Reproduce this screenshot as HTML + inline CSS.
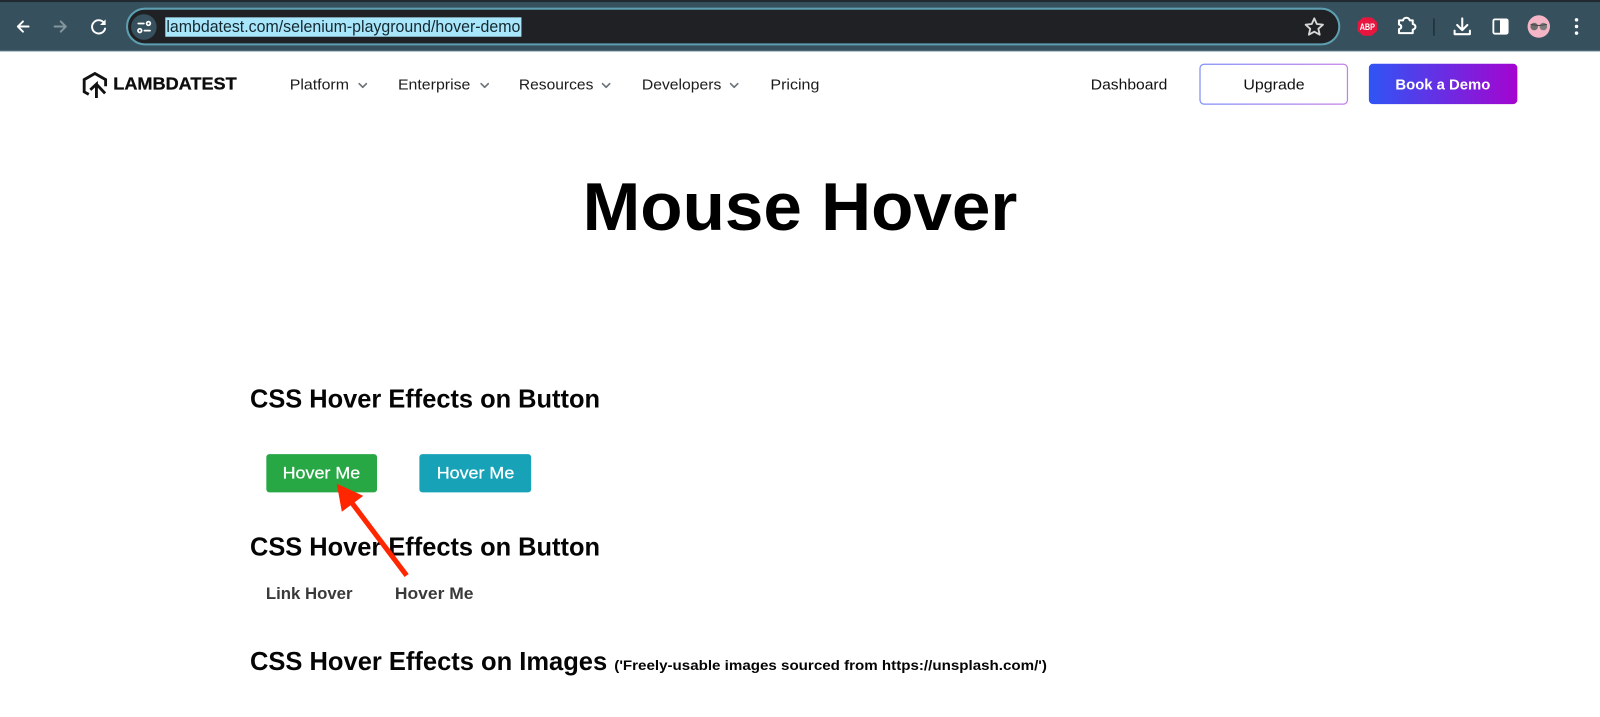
<!DOCTYPE html>
<html lang="en">
<head>
<meta charset="utf-8">
<title>Mouse Hover</title>
<style>
html,body{margin:0;padding:0;background:#fff;width:1600px;height:717px;overflow:hidden}
svg{display:block}
text{font-family:"Liberation Sans",sans-serif}
</style>
</head>
<body>
<svg width="1600" height="717" viewBox="0 0 1568 702.66" preserveAspectRatio="none" xmlns="http://www.w3.org/2000/svg">
<defs>
<linearGradient id="g1" x1="0" x2="1" y1="0" y2="0"><stop offset="0" stop-color="#2f55f5"/><stop offset="1" stop-color="#a405d0"/></linearGradient>
<linearGradient id="g2" x1="0" x2="1" y1="0" y2="0"><stop offset="0" stop-color="#7e8ff8"/><stop offset="1" stop-color="#c47fe6"/></linearGradient>
</defs>
<rect width="1568" height="703" fill="#fff"/>

<!-- browser toolbar -->
<rect width="1568" height="50.500" fill="#36515d"/>
<rect width="1568" height="2" fill="#202a30"/>
<rect y="49.800" width="1568" height="1.200" fill="#b5c8cf"/>

<g fill="none" stroke-linecap="round" stroke-linejoin="round" stroke-width="1.900">
<path d="M28 26H17.500M22.500 21L17.500 26L22.500 31" stroke="#fff"/>
<path d="M53.500 26H64.500M59.500 21L64.500 26L59.500 31" stroke="#84979f"/>
<path d="M102 22.500A6.500 6.500 0 1 0 103 28" stroke="#fff"/>
</g>
<path d="M103.500 19V24.500H98Z" fill="#fff"/>

<rect x="124.500" y="8.500" width="1188" height="35" rx="17.500" fill="#202124" stroke="#5d9eb0" stroke-width="2"/>
<circle cx="141" cy="26.500" r="12.500" fill="#36515d"/>
<g fill="none" stroke="#fff" stroke-width="1.700" stroke-linecap="round">
<path d="M135.500 23H141"/><circle cx="145.500" cy="23" r="1.800"/>
<path d="M141.500 30H147"/><circle cx="137" cy="30" r="1.800"/>
</g>
<rect x="162" y="17" width="349" height="19" fill="#a8e6fb"/>
<text x="163" y="31.500" font-size="16" fill="#15282f" textLength="347" lengthAdjust="spacingAndGlyphs">lambdatest.com/selenium-playground/hover-demo</text>

<path d="M1288 18L1290.500 23.500L1296.500 24.200L1292 28.200L1293.300 34L1288 31.100L1282.700 34L1284 28.200L1279.500 24.200L1285.500 23.500Z" fill="none" stroke="#d8d8d8" stroke-width="1.800" stroke-linejoin="round"/>

<!-- ABP -->
<path d="M1335.800 17H1344.200L1349.500 21.800V30.200L1344.200 35H1335.800L1330.500 30.200V21.800Z" fill="#e8163f"/>
<text x="1340" y="29.500" font-size="9" font-weight="bold" fill="#fff" text-anchor="middle" textLength="15" lengthAdjust="spacingAndGlyphs">ABP</text>

<!-- extension -->
<path d="M1371 20H1375C1375.500 16.500 1381 16.500 1381.500 20H1384.500V23.500C1388 24 1388 28.500 1384.500 29V32.500H1371V28.500C1374 28 1374 24.500 1371 24Z" fill="none" stroke="#fff" stroke-width="2" stroke-linejoin="round"/>

<rect x="1404.500" y="18" width="1.500" height="17" fill="#1f3038"/>

<!-- download -->
<g fill="none" stroke="#fff" stroke-width="2" stroke-linecap="round" stroke-linejoin="round">
<path d="M1433 18V29M1428 24.500L1433 29.500L1438 24.500"/>
<path d="M1425.500 30V33.500H1440.500V30"/>
</g>

<!-- side panel -->
<rect x="1463.500" y="19" width="14" height="14" rx="1.500" fill="#36515d" stroke="#fff" stroke-width="1.800"/>
<rect x="1470" y="18.500" width="8" height="15" rx="1" fill="#fff"/>

<!-- avatar -->
<circle cx="1508" cy="26" r="11" fill="#f4b5c6"/>
<circle cx="1503.500" cy="26" r="3.700" fill="#6e6e6e"/>
<circle cx="1512.500" cy="26" r="3.700" fill="#7c7c7c"/>
<path d="M1500 24L1508 25L1516 24" stroke="#444" stroke-width="1" fill="none"/>

<!-- menu -->
<g fill="#fff">
<circle cx="1545" cy="19.500" r="1.700"/>
<circle cx="1545" cy="26" r="1.700"/>
<circle cx="1545" cy="32.500" r="1.700"/>
</g>

<!-- logo -->
<g fill="none" stroke="#111" stroke-width="2.800" stroke-linejoin="miter">
<path d="M87 92.500L82.500 90V78L93 72L103.500 78V84.500"/>
<path d="M94.500 96V82.500L88.500 88M94.500 82.500L103 91.500"/>
</g>
<text x="111" y="87.500" font-size="17" font-weight="bold" fill="#0d0d0d" stroke="#0d0d0d" stroke-width=".3" textLength="121" lengthAdjust="spacingAndGlyphs">LAMBDATEST</text>

<!-- nav -->
<g font-size="14.500" fill="#1c1c1c">
<text x="284" y="87.500" textLength="58" lengthAdjust="spacingAndGlyphs">Platform</text>
<text x="390" y="87.500" textLength="71" lengthAdjust="spacingAndGlyphs">Enterprise</text>
<text x="508.500" y="87.500" textLength="73" lengthAdjust="spacingAndGlyphs">Resources</text>
<text x="629" y="87.500" textLength="78" lengthAdjust="spacingAndGlyphs">Developers</text>
<text x="755" y="87.500" textLength="48" lengthAdjust="spacingAndGlyphs">Pricing</text>
<text x="1069" y="87.500" fill="#111" textLength="75" lengthAdjust="spacingAndGlyphs">Dashboard</text>
</g>
<g fill="none" stroke="#6c7378" stroke-width="1.600" stroke-linecap="round" stroke-linejoin="round">
<path d="M352 82L355.500 85.500L359 82"/>
<path d="M471.500 82L475 85.500L478.500 82"/>
<path d="M590.500 82L594 85.500L597.500 82"/>
<path d="M716 82L719.500 85.500L723 82"/>
</g>

<rect x="1176" y="63" width="144.500" height="39" rx="4" fill="#fff" stroke="url(#g2)" stroke-width="1.200"/>
<text x="1248.500" y="87.500" font-size="14.500" fill="#111" text-anchor="middle" textLength="60" lengthAdjust="spacingAndGlyphs">Upgrade</text>
<rect x="1341.500" y="62.500" width="145.500" height="39.500" rx="4" fill="url(#g1)"/>
<text x="1414" y="87.500" font-size="14.500" font-weight="bold" fill="#fff" text-anchor="middle" textLength="93" lengthAdjust="spacingAndGlyphs">Book a Demo</text>

<!-- title -->
<text x="571" y="225.500" font-size="66" font-weight="bold" fill="#000" textLength="426" lengthAdjust="spacingAndGlyphs">Mouse Hover</text>

<!-- section 1 -->
<text x="245" y="399.500" font-size="25" font-weight="bold" fill="#050505" textLength="343" lengthAdjust="spacingAndGlyphs">CSS Hover Effects on Button</text>
<rect x="261" y="445" width="108.500" height="37.500" rx="3" fill="#28a745"/>
<text x="277" y="469" font-size="16.500" fill="#fff" stroke="#fff" stroke-width=".25" textLength="76" lengthAdjust="spacingAndGlyphs">Hover Me</text>
<rect x="411" y="445" width="109.500" height="37.500" rx="3" fill="#17a2b8"/>
<text x="428" y="469" font-size="16.500" fill="#fff" stroke="#fff" stroke-width=".25" textLength="76" lengthAdjust="spacingAndGlyphs">Hover Me</text>

<!-- section 2 -->
<text x="245" y="544.500" font-size="25" font-weight="bold" fill="#050505" textLength="343" lengthAdjust="spacingAndGlyphs">CSS Hover Effects on Button</text>
<text x="260.500" y="587" font-size="16.500" font-weight="bold" fill="#3a3a3a" textLength="85" lengthAdjust="spacingAndGlyphs">Link Hover</text>
<text x="387" y="587" font-size="16.500" font-weight="bold" fill="#3a3a3a" textLength="77" lengthAdjust="spacingAndGlyphs">Hover Me</text>

<!-- section 3 -->
<text x="245" y="656.500" font-size="25" font-weight="bold" fill="#050505" textLength="350" lengthAdjust="spacingAndGlyphs">CSS Hover Effects on Images</text>
<text x="602" y="656.500" font-size="14" font-weight="bold" fill="#050505" textLength="424" lengthAdjust="spacingAndGlyphs">('Freely-usable images sourced from https://unsplash.com/')</text>

<!-- red arrow -->
<path d="M398.500 564L345 493" stroke="#ff2600" stroke-width="5" fill="none"/>
<path d="M330 474L356 486L335 501.500Z" fill="#ff2600"/>
</svg>
</body>
</html>
